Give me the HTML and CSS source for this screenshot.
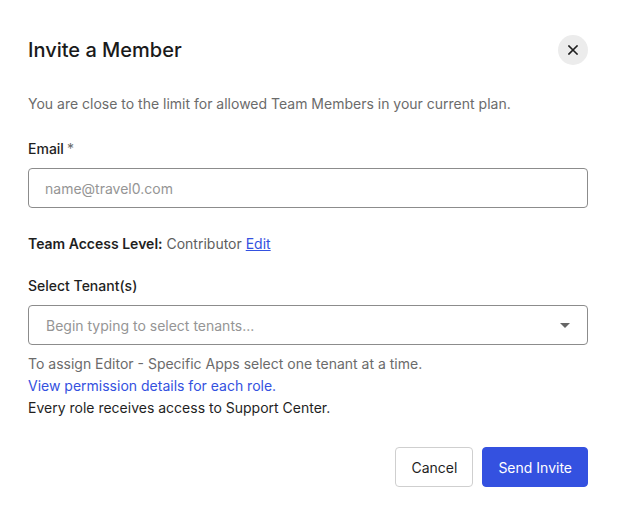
FILE: index.html
```html
<!DOCTYPE html>
<html lang="en">
<head>
<meta charset="utf-8">
<title>Invite a Member</title>
<link rel="stylesheet" href="styles.css">
</head>
<body>
<div class="dialog">
  <div class="header">
    <h1 class="title">Invite a Member</h1>
    <button class="close" aria-label="Close">
      <svg width="10" height="10" viewBox="0 0 10 10"><path d="M1 1L9 9M9 1L1 9" stroke="#1f1f1f" stroke-width="1.6" stroke-linecap="square"/></svg>
    </button>
  </div>
  <p class="desc">You are close to the limit for allowed Team Members in your current plan.</p>
  <label class="label email-label">Email<span class="req">*</span></label>
  <div class="field"><span class="placeholder">name@travel0.com</span></div>
  <p class="access"><strong>Team Access Level:</strong> <span class="role">Contributor</span> <a class="edit" href="#">Edit</a></p>
  <label class="label tenant-label">Select Tenant(s)</label>
  <div class="field select">
    <span class="placeholder">Begin typing to select tenants...</span>
    <svg class="caret" width="10" height="5" viewBox="0 0 10 5"><path d="M0 0H10L5 5Z" fill="#666"/></svg>
  </div>
  <div class="help">
    <p class="help-line">To assign Editor - Specific Apps select one tenant at a time.</p>
    <p class="help-line"><a class="link" href="#">View permission details for each role.</a></p>
    <p class="help-line dark">Every role receives access to Support Center.</p>
  </div>
  <div class="actions">
    <button class="btn btn-secondary">Cancel</button>
    <button class="btn btn-primary">Send Invite</button>
  </div>
</div>
</body>
</html>
```
FILE: styles.css
```css
* { box-sizing: border-box; }
html, body {
  margin: 0;
  background: #ffffff;
}
body {
  font-family: Inter, "Noto Sans", "Liberation Sans", sans-serif;
  color: #1f1f1f;
  font-size: 14px;
}
.dialog {
  width: 618px;
  padding: 35px 30px 0 28px;
  display: flex;
  flex-direction: column;
}
.header {
  display: flex;
  justify-content: space-between;
  align-items: center;
  height: 30px;
}
.title {
  margin: 0;
  font-size: 20px;
  font-weight: 500;
  line-height: 30px;
  color: #1a1a1a;
}
.close {
  width: 30px;
  height: 30px;
  border-radius: 50%;
  border: none;
  background: #ececec;
  padding: 0;
  display: flex;
  align-items: center;
  justify-content: center;
}
.desc {
  margin: 29px 0 0;
  line-height: 20px;
  color: #6b6b6b;
}
.label {
  display: block;
  font-weight: 500;
  line-height: 20px;
  color: #1f1f1f;
}
.email-label { margin-top: 25px; }
.req { color: #6b6b6b; font-weight: 400; margin-left: 3px; }
.field {
  margin-top: 9px;
  height: 40px;
  border: 1px solid #8c8c8c;
  border-radius: 4px;
  display: flex;
  align-items: center;
  padding: 0 16px;
}
.placeholder { color: #959595; }
.select { justify-content: space-between; padding-left: 17px; padding-right: 17px; margin-top: 9px; }
.caret { display: block; }
.access {
  margin: 26px 0 0;
  line-height: 20px;
  color: #5e5e5e;
}
.access strong { color: #1f1f1f; font-weight: 600; }
.edit { color: #3451e0; text-decoration: underline; }
.tenant-label { margin-top: 22px; }
.help { margin-top: 8px; }
.help-line {
  margin: 0;
  line-height: 22px;
  color: #6b6b6b;
}
.help-line.dark { color: #1f1f1f; }
.link { color: #3451e0; text-decoration: none; }
.actions {
  margin-top: 28px;
  display: flex;
  justify-content: flex-end;
  gap: 9px;
}
.btn {
  height: 40px;
  padding: 0 15px;
  border-radius: 4px;
  font-family: inherit;
  font-size: 14px;
  font-weight: 400;
}
.btn-secondary {
  background: #ffffff;
  border: 1px solid #cfcfcf;
  color: #1f1f1f;
}
.btn-primary {
  background: #3451e0;
  border: 1px solid #3451e0;
  color: #ffffff;
}
```
